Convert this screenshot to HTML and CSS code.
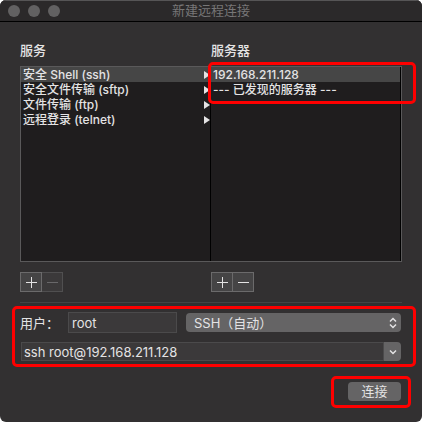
FILE: index.html
```html
<!DOCTYPE html>
<html lang="zh-CN">
<head>
    <meta charset="UTF-8">
    <meta name="viewport" content="width=device-width, initial-scale=1.0">
    <title>新建远程连接</title>
    <link rel="stylesheet" href="styles.css">
</head>
<body>

<div class="window">
    <header class="titlebar">
        <div class="lights"><span></span><span></span><span></span></div>
        <h1>新建远程连接</h1>
    </header>

    <main class="content">
        <div class="columns headings">
            <h2>服务</h2>
            <h2>服务器</h2>
        </div>

        <div class="browser">
            <ul class="list services">
                <li class="selected">安全 Shell (ssh)</li>
                <li>安全文件传输 (sftp)</li>
                <li>文件传输 (ftp)</li>
                <li>远程登录 (telnet)</li>
            </ul>
            <ul class="list servers">
                <li class="selected">192.168.211.128</li>
                <li>--- 已发现的服务器 ---</li>
            </ul>
            <span class="mark mark-servers"></span>
        </div>

        <div class="columns tools">
            <div class="segment">
                <button type="button" class="active" aria-label="添加服务"><svg viewBox="0 0 20 18"><path d="M10.5 4v11M5 9.5h11"/></svg></button>
                <button type="button" disabled aria-label="移除服务"><svg viewBox="0 0 20 18"><path d="M5 9.5h11"/></svg></button>
            </div>
            <div class="segment">
                <button type="button" aria-label="添加服务器"><svg viewBox="0 0 20 18"><path d="M10.5 4v11M5 9.5h11"/></svg></button>
                <button type="button" aria-label="移除服务器"><svg viewBox="0 0 20 18"><path d="M5 9.5h11"/></svg></button>
            </div>
        </div>

        <form class="login">
            <div class="row">
                <label for="user">用户：</label>
                <input type="text" id="user" class="field user" value="root">
                <div class="popup">
                    <select id="protocol" aria-label="协议">
                        <option>SSH（自动）</option>
                    </select>
                    <svg viewBox="0 0 8 12"><path d="M1 4.5l3-3 3 3M1 7.5l3 3 3-3"/></svg>
                </div>
            </div>
            <div class="combo">
                <input type="text" class="field" aria-label="命令" value="ssh root@192.168.211.128">
                <button type="button" aria-label="历史记录"><svg viewBox="0 0 8 6"><path d="M1 1.5l3 3 3-3"/></svg></button>
            </div>
            <span class="mark mark-login"></span>
        </form>

        <div class="actions">
            <div class="connect">
                <button type="button">连接</button>
                <span class="mark mark-connect"></span>
            </div>
        </div>
    </main>
</div>

</body>
</html>
```
FILE: styles.css
```css
* { box-sizing: border-box; }

html { background: #fff; }

body {
    margin: 0;
    font-family: Inter, "Noto Sans CJK SC", sans-serif;
    font-size: 13px;
    color: #e4e3e4;
}

button, input, select {
    font: inherit;
    color: inherit;
    margin: 0;
}

svg { fill: none; stroke: currentColor; display: block; }

.window {
    min-height: 100vh;
    background: #323031;
    border-radius: 6px;
    overflow: hidden;
}

/* Title bar */
.titlebar {
    position: relative;
    height: 22px;
    background: #2b292a;
    border-top: 1px solid #565556;
    border-bottom: 1px solid #000;
}
.titlebar h1 {
    margin: 0;
    font-size: 13px;
    font-weight: 400;
    line-height: 18px;
    text-align: center;
    color: #777677;
}
.lights {
    position: absolute;
    top: 4px;
    left: 8px;
    display: flex;
    gap: 8px;
}
.lights span {
    width: 12px;
    height: 12px;
    border-radius: 50%;
    background: #626162;
}

.content { padding: 18px 20px 20px; }

.columns {
    display: grid;
    grid-template-columns: 1fr 1fr;
}
.headings h2 {
    margin: 0;
    font-size: 13px;
    font-weight: 500;
    line-height: 20px;
}

/* Service / server browser */
.browser {
    position: relative;
    display: grid;
    grid-template-columns: 1fr 1fr;
    height: 196px;
    margin-top: 6px;
    background: #1f1d1e;
    border: 1px solid #5a595a;
}
.list {
    margin: 0;
    padding: 0;
    list-style: none;
    font-size: 12px;
    font-weight: 500;
    border-right: 1px solid #000;
}
.list li {
    display: flex;
    align-items: center;
    justify-content: space-between;
    height: 15px;
    padding-left: 2px;
    line-height: 15px;
    white-space: nowrap;
}
.list .selected { background: #464646; }
.services li::after {
    content: "";
    border-left: 6px solid #e4e3e4;
    border-top: 4px solid transparent;
    border-bottom: 4px solid transparent;
}

/* Add / remove buttons */
.tools { margin-top: 10px; }
.segment { display: flex; }
.segment button {
    width: 22px;
    height: 20px;
    padding: 0;
    background: #454445;
    border: 1px solid #6b6a6b;
}
.segment button + button { margin-left: -1px; }
.segment .active { position: relative; }
.segment button:disabled {
    background: #3b393a;
    border-color: #504f50;
    color: #69686a;
}

/* Login details */
.login {
    position: relative;
    margin-top: 10px;
    padding-top: 9px;
    border-top: 1px solid #454445;
}
.row {
    display: flex;
    align-items: center;
}
.row label {
    width: 48px;
    line-height: 18px;
    white-space: nowrap;
}
.field {
    height: 21px;
    padding: 0 3px;
    background: #3b393a;
    border: 1px solid #4b4a4b;
    border-radius: 0;
    outline: none;
}
.user { width: 109px; }
.popup {
    position: relative;
    flex: 1;
    margin: 0 1px 0 9px;
}
.popup select {
    appearance: none;
    display: block;
    width: 100%;
    height: 19px;
    padding: 0 8px;
    background: #656465;
    border: 0;
    border-radius: 4px;
}
.popup svg {
    position: absolute;
    top: 4px;
    right: 4px;
    width: 8px;
    height: 12px;
    stroke-width: 1.5;
    pointer-events: none;
}
.combo {
    display: flex;
    margin: 9px 1px 0;
}
.combo .field {
    flex: 1;
    min-width: 0;
    height: 19px;
    padding: 0 2px;
}
.combo button {
    display: grid;
    place-items: center;
    width: 17px;
    height: 19px;
    padding: 0;
    background: #656465;
    border: 0;
    border-radius: 0 4px 4px 0;
}
.combo svg { width: 8px; height: 6px; stroke-width: 1.5; }

.actions {
    display: flex;
    justify-content: flex-end;
    margin: 21px 1px 0 0;
}
.connect { position: relative; }
.connect button {
    display: block;
    width: 53px;
    height: 19px;
    padding: 0;
    line-height: 19px;
    background: #656465;
    border: 0;
    border-radius: 4px;
}

/* Red highlight boxes */
.mark {
    position: absolute;
    border: 3px solid #fe0000;
    border-radius: 5px;
    pointer-events: none;
}
.mark-servers { top: -5px; left: calc(50% - 3px); right: -15px; height: 42px; }
.mark-login { top: 3px; bottom: -6px; left: -8px; right: -14px; }
.mark-connect { top: -6px; bottom: -7px; left: -17px; right: -10px; }
```
